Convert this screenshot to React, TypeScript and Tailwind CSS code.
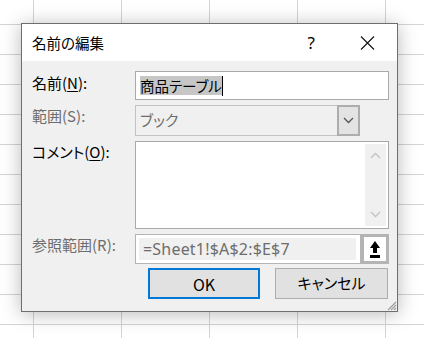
import React from "react";

const font = "font-['Yu_Gothic_UI','Noto_Sans_CJK_JP',sans-serif] [font-feature-settings:'palt']";

function Chevron({ up, color }: { up?: boolean; color: string }) {
  return (
    <svg width="11" height="7" viewBox="0 0 11 7">
      <polyline
        points={up ? "1,6 5.5,1.5 10,6" : "1,1 5.5,5.5 10,1"}
        fill="none"
        stroke={color}
        strokeWidth="1.3"
      />
    </svg>
  );
}

function Label({ text, mn, rest, disabled }: { text: string; mn: string; rest?: string; disabled?: boolean }) {
  return (
    <div className={`w-[103px] shrink-0 text-[15px] leading-[20px] ${disabled ? "text-[#6d6d6d]" : "text-black"}`}>
      {text}(
      {disabled ? mn : <span className="underline underline-offset-2">{mn}</span>}
      ){rest ?? ":"}
    </div>
  );
}

export default function App() {
  return (
    <div
      className={`${font} w-[424px] h-[338px] overflow-hidden bg-white bg-[linear-gradient(to_right,#d4d4d4_1px,transparent_1px),linear-gradient(to_bottom,#d4d4d4_1px,transparent_1px)] bg-[size:88px_30px] bg-[position:33px_24px] pt-[23px] pl-[21px]`}
    >
      <div className="w-[377px] h-[289px] border border-[#6e6e6e] bg-[#f0f0f0] shadow-[0_2px_18px_rgba(0,0,0,0.28)] flex flex-col relative">
        {/* title bar */}
        <div className="h-[37px] bg-white flex items-center pl-[10px] shrink-0">
          <span className="text-[14.5px] text-black">名前の編集</span>
          <span className="ml-auto mr-[45px] text-[17px] text-black font-['Segoe_UI','Noto_Sans',sans-serif]">?</span>
          <svg width="15" height="14" viewBox="0 0 15 14" className="mr-[22px]">
            <path d="M1 0.5 L14 13.5 M14 0.5 L1 13.5" stroke="#111" strokeWidth="1.1" />
          </svg>
        </div>

        {/* body */}
        <div className="flex flex-col pl-[10px] pr-[8px] pt-[10px] gap-[5px]">
          <div className="flex items-start">
            <div className="pt-[2px]">
              <Label text="名前" mn="N" />
            </div>
            <div className="h-[29px] flex-1 bg-white border border-[#a9a9a9] flex items-center pl-[4px]">
              <span className="bg-[#c6c6c6] text-[14.5px] leading-[19px] text-black">商品テーブル</span>
              <span className="w-px h-[20px] bg-black" />
            </div>
          </div>

          <div className="flex items-start">
            <div className="pt-[1px]">
              <Label text="範囲" mn="S" disabled />
            </div>
            <div className="h-[31px] w-[225px] border border-[#c3c3c3] flex items-center">
              <span className="flex-1 pl-[4px] text-[15px] text-[#6d6d6d]">ブック</span>
              <div className="h-[31px] w-[23px] -mr-px -my-px bg-[#e3e3e3] border-2 border-[#adadad] flex items-center justify-center">
                <Chevron color="#555" />
              </div>
            </div>
          </div>

          <div className="flex items-start">
            <div className="pt-[1px]">
              <Label text="コメント" mn="O" />
            </div>
            <div className="h-[88px] flex-1 bg-white border border-[#a9a9a9] flex justify-end p-[2px]">
              <div className="w-[21px] bg-[#f0f0f0] flex flex-col items-center justify-between py-[8px]">
                <Chevron up color="#c2c2c2" />
                <Chevron color="#c2c2c2" />
              </div>
            </div>
          </div>

          <div className="flex items-start">
            <div className="pt-[1px]">
              <Label text="参照範囲" mn="R" disabled />
            </div>
            <div className="h-[30px] w-[226px] border border-[#b4b4b4] bg-white p-[3px] pr-[4px]">
              <div className="h-full bg-[#f0f0f0] flex items-center pl-[4px] text-[16px] text-[#6d6d6d] font-['Segoe_UI','Noto_Sans','Noto_Sans_CJK_JP',sans-serif] tracking-[0.2px]">
                =Sheet1!$A$2:$E$7
              </div>
            </div>
            <div className="h-[30px] w-[28px] border-[3px] border-[#b4b4b4] bg-white flex items-center justify-center">
              <svg width="12" height="17" viewBox="0 0 12 17">
                <path d="M6 0 L11 7 L8 7 L8 12 L4 12 L4 7 L1 7 Z" fill="#000" />
                <rect x="1" y="14" width="10" height="3" fill="#000" />
              </svg>
            </div>
          </div>

          <div className="flex justify-end gap-[15px] pr-[1px] mt-[-1px]">
            <button className="h-[31px] w-[112px] bg-[#e1e1e1] border-2 border-[#0078d7] text-[16px] text-black">
              OK
            </button>
            <button className="h-[31px] w-[113px] bg-[#e1e1e1] border border-[#adadad] text-[15px] text-black">
              キャンセル
            </button>
          </div>
        </div>

        {/* resize grip */}
        <svg width="11" height="11" viewBox="0 0 11 11" className="absolute right-0 bottom-0">
          <path d="M10 2 L2 10 M10 5 L5 10 M10 8 L8 10" stroke="#a0a0a0" strokeWidth="1.2" />
        </svg>
      </div>
    </div>
  );
}
